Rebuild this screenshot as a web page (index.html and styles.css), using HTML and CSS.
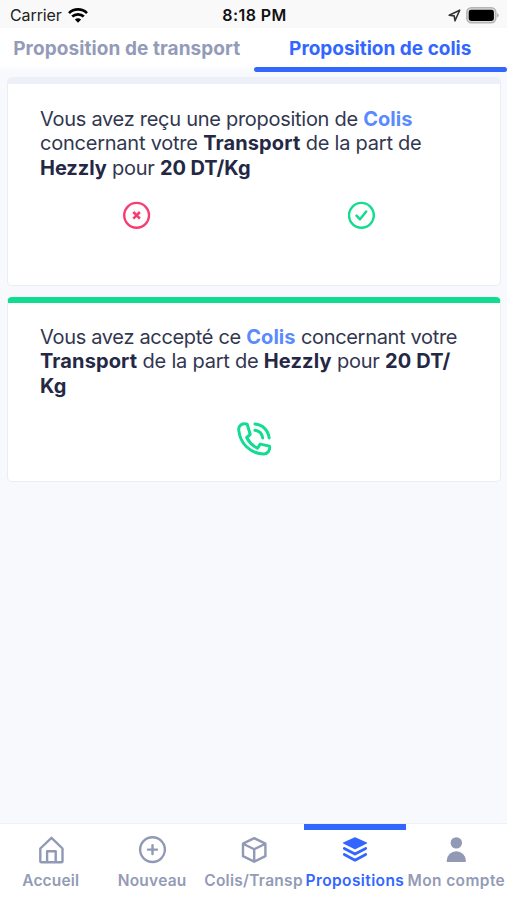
FILE: index.html
```html
<!DOCTYPE html>
<html lang="fr">
<head>
<meta charset="utf-8">
<meta name="viewport" content="width=device-width, initial-scale=1">
<title>Propositions</title>
<link rel="stylesheet" href="styles.css">
</head>
<body>
<header class="status">
  <div class="carrier"><span>Carrier</span>
    <svg width="20" height="15" viewBox="0 0 20 15"><g fill="none" stroke="#000" stroke-width="2.7"><path d="M1 5.1C6 .2 14 .2 19 5.1"/><path d="M4.2 8.6c3.3-3.1 8.3-3.1 11.6 0"/></g><path d="M6.900 11.500c1.800-1.600 4.400-1.600 6.200 0L10 14.700z"/></svg>
  </div>
  <div class="clock">8:18 PM</div>
  <div class="indicators">
    <svg width="13" height="13" viewBox="0 0 13 13"><path d="M1.200 6.300 11.700 1.200 7 11.800 6.200 6.900z" fill="none" stroke="#333" stroke-width="1.600" stroke-linejoin="round"/></svg>
    <svg width="33" height="17" viewBox="0 0 33 17"><rect x=".8" y=".8" width="29" height="15" rx="4.500" fill="#ddd" stroke="#b5b5b5" stroke-width="1.500"/><rect x="2.700" y="2.700" width="25.200" height="11.200" rx="2.400"/><path d="M31.200 6v4.600q1.400-.7 1.400-2.300T31.200 6z" fill="#aaa"/></svg>
  </div>
</header>
<nav class="tabs">
  <div class="tab"><span class="tab-one">Proposition de transport</span></div>
  <div class="tab selected"><span>Proposition de colis</span></div>
</nav>
<main class="content">
  <article class="card pending">
    <p><span class="line">Vous avez reçu une proposition de <b class="link">Colis</b></span>
    <span class="line roomy">concernant votre <b>Transport</b> de la part de</span>
    <span class="line tight"><b>Hezzly</b> pour <b>20 DT/Kg</b></span></p>
    <div class="choices">
      <svg width="28" height="28" viewBox="0 0 28 28" fill="none" stroke="#f83d70" stroke-width="2.400"><circle cx="13.600" cy="14.300" r="12.400"/><path d="m10.300 11 6.600 6.600m0-6.600-6.600 6.600" stroke-width="2.600"/></svg>
      <svg width="28" height="28" viewBox="0 0 28 28" fill="none" stroke="#12dc91" stroke-width="2.400" stroke-linecap="round" stroke-linejoin="round"><circle cx="13.400" cy="14.300" r="12.400"/><path d="m8.500 14.600 3.500 3.700 6.200-7.800" stroke-width="2.500"/></svg>
    </div>
  </article>
  <article class="card accepted">
    <p><span class="line snug">Vous avez accepté ce <b class="link">Colis</b> concernant votre</span>
    <span class="line roomy"><b>Transport</b> de la part de <b>Hezzly</b> pour <b>20 DT/</b></span>
    <span class="line"><b>Kg</b></span></p>
    <div class="call">
      <svg width="36" height="36" viewBox="0 0 36 36" fill="none" stroke="#12dc91" stroke-width="3" stroke-linecap="round" stroke-linejoin="round"><path d="M11.200 3.100c-5-1-9.200 1-8.400 6.500C4.400 22.500 13.500 32 27.500 33c4 .2 6.800-3.500 6-7.900l-9.300-2-2.700 4.100c-5.200-2.600-8.300-5.600-10.800-10.700l3.500-3z"/><path d="M19 3.100c7.500.6 13.300 6.300 14.100 13.800M19 9.300c4 .6 7.100 3.600 7.700 7.600"/></svg>
    </div>
  </article>
</main>
<nav class="bottom">
  <div class="item"><svg width="28" height="28" viewBox="0 0 28 28" fill="none" stroke="#9199b5" stroke-width="2.400" stroke-linejoin="round"><path d="M14.500 1.800 3.300 12.500V25q0 1.300 1.300 1.300h19.600q1.300 0 1.300-1.300V12.500z"/><path d="M10.100 26.300V15.200h8.600v11.100"/></svg><span class="t1">Accueil</span></div>
  <div class="item"><svg width="28" height="28" viewBox="0 0 28 28" fill="none" stroke="#9199b5" stroke-width="2.400" stroke-linecap="round"><circle cx="14.500" cy="13.600" r="12.400"/><path d="M10 13.600h9M14.500 9.100v9"/></svg><span class="t2">Nouveau</span></div>
  <div class="item"><svg width="28" height="28" viewBox="0 0 28 28" fill="none" stroke="#9199b5" stroke-width="2.400" stroke-linejoin="round"><path d="m14.200 2.200 11.200 5.500v12.500l-11.200 5.500L3 20.200V7.700zM3 7.700l11.200 5.600 11.200-5.600M14.200 13.300v12.400"/></svg><span class="t3">Colis/Transp</span></div>
  <div class="item current"><svg width="28" height="28" viewBox="0 0 28 28" fill="#3366ff"><path d="M13.200 1.500q.8-.4 1.600 0l11 5q.9.500 0 1l-11 5.600q-.8.400-1.600 0l-11-5.600q-.9-.5 0-1z"/><path d="m3.300 12.400 10.700 5.600 10.700-5.600M3.300 18.500 14 24.200l10.700-5.700" fill="none" stroke="#3366ff" stroke-width="2.800" stroke-linecap="round" stroke-linejoin="round"/></svg><span class="t4">Propositions</span></div>
  <div class="item"><svg width="28" height="28" viewBox="0 0 28 28" fill="#9199b5"><circle cx="14.300" cy="6.900" r="5.700"/><path d="M4.700 25.300v-.5a9.600 9.600 0 0 1 19.200 0v.5q0 .7-.7.700H5.400q-.7 0-.7-.7z"/></svg><span class="t5">Mon compte</span></div>
</nav>
</body>
</html>
```
FILE: styles.css
```css
* { box-sizing: border-box; }
body {
  margin: 0;
  height: 900px;
  display: flex;
  flex-direction: column;
  overflow: hidden;
  background: #f7f9fc;
  color: #222b45;
  font-family: Inter, "Liberation Sans", sans-serif;
}
svg { display: block; flex: none; }
span { white-space: nowrap; }
b { font-weight: 700; letter-spacing: 0.05px; color: #242845; }
.status {
  height: 28px;
  padding: 2px 8px 0 10px;
  display: grid;
  grid-template-columns: 1fr auto 1fr;
  align-items: center;
  background: #f9f9f9;
  color: #222;
  font-size: 16px;
}
.carrier { display: flex; align-items: center; gap: 6px; }
.carrier span { letter-spacing: -0.1px; }
.clock { font-weight: 600; color: #111; letter-spacing: 0.4px; }
.indicators { display: flex; align-items: center; justify-content: flex-end; gap: 5px; }
.tabs { display: flex; height: 45px; flex: none; background: linear-gradient(#fff 0 37px, #f7f9fc 44px); }
.tab {
  flex: 1;
  display: flex;
  justify-content: center;
  font-size: 19px;
  font-weight: 700;
  line-height: 41px;
  color: #939bb8;
}
.tab-one { letter-spacing: 0.08px; }
.selected { display: grid; justify-items: center; color: #3366ff; }
.selected > *, .selected::after { grid-area: 1 / 1; }
.selected::after { content: ""; width: 253px; height: 5px; margin: 39px 0 0; border-radius: 3px; background: #3366ff; }
.content { flex: 1; padding: 4px 6px 0 7px; }
.card {
  border: 1px solid #e9edf5;
  border-radius: 5px;
  background: #fff;
  overflow: hidden;
  padding: 0 32px;
}
.pending { height: 209px; border-top: 7px solid #edf0f8; margin-bottom: 11px; }
.accepted { height: 185px; border-top: 6px solid #12dc91; }
.card p { margin: 23px 0 0; font-size: 20px; line-height: 24.300px; letter-spacing: -0.28px; color: #323750; }
.accepted p { margin-top: 22px; }
.line { display: block; width: max-content; }
.roomy { letter-spacing: -0.23px; }
.roomy b { letter-spacing: 0.12px; }
.snug { letter-spacing: -0.32px; }
.tight b { letter-spacing: -0.05px; }
b.link { color: #598bff; }
.choices { display: grid; grid-template-columns: 1fr 1fr; justify-items: center; margin: 21px -6px 0 -16px; }
.call { display: flex; justify-content: center; margin-top: 23px; }
.bottom { height: 77px; display: flex; background: #fff; border-top: 1px solid #edf1f7; }
.item {
  flex: 1 1 0;
  min-width: 0;
  display: flex;
  flex-direction: column;
  align-items: center;
  padding-top: 12px;
  gap: 7px;
  color: #939bb5;
  font-size: 15.500px;
  font-weight: 600;
  line-height: 20px;
}
.current { color: #3366ff; border-top: 6px solid #3366ff; padding-top: 6px; }
.t1 { letter-spacing: 0.15px; }
.t2 { letter-spacing: 0.25px; }
.t3 { letter-spacing: 0.28px; }
.t4 { letter-spacing: 0.4px; }
.t5 { letter-spacing: 0.4px; }
```
